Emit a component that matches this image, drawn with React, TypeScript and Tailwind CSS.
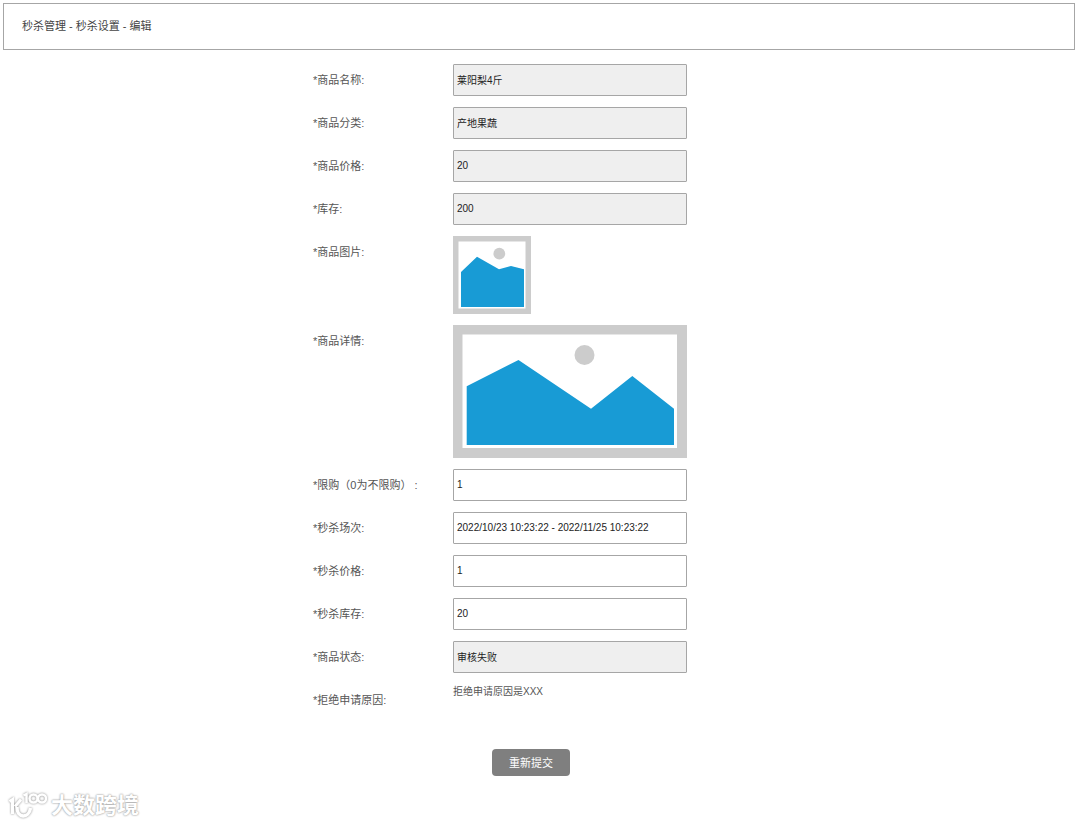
import { useState } from "react";

type Field = { id: string; label: string; value: string; readOnly?: boolean };

const goodsFields: Field[] = [
  { id: "name", label: "*商品名称:", value: "莱阳梨4斤", readOnly: true },
  { id: "category", label: "*商品分类:", value: "产地果蔬", readOnly: true },
  { id: "price", label: "*商品价格:", value: "20", readOnly: true },
  { id: "stock", label: "*库存:", value: "200", readOnly: true },
];

const seckillFields: Field[] = [
  { id: "limit", label: "*限购（0为不限购） :", value: "1" },
  { id: "session", label: "*秒杀场次:", value: "2022/10/23 10:23:22 - 2022/11/25 10:23:22" },
  { id: "seckillPrice", label: "*秒杀价格:", value: "1" },
  { id: "seckillStock", label: "*秒杀库存:", value: "20" },
  { id: "status", label: "*商品状态:", value: "审核失败", readOnly: true },
];

function FieldRow({ field }: { field: Field }) {
  const [value, setValue] = useState(field.value);
  return (
    <div className="flex items-center">
      <label htmlFor={field.id} className="w-[140px] shrink-0">{field.label}</label>
      <input
        id={field.id}
        type="text"
        value={value}
        readOnly={field.readOnly}
        onChange={(e) => setValue(e.target.value)}
        className="h-8 min-w-0 flex-1 rounded-[1px] border border-[#a6a6a6] bg-white px-[3px] pb-[2px] text-[10px] text-[#222] outline-none read-only:bg-[#efefef]"
      />
    </div>
  );
}

function Thumbnail() {
  return (
    <svg viewBox="0 0 78 78" className="w-[78px]" role="img" aria-label="商品图片">
      <rect width="78" height="78" fill="#ccc" />
      <rect x="5.5" y="5.5" width="67" height="67" fill="#fff" />
      <circle cx="46.3" cy="17.7" r="5.9" fill="#ccc" />
      <path d="M8 36 24 20.7 46 33.3 58 30 71 33.3V71H8Z" fill="#189bd5" />
    </svg>
  );
}

function DetailPicture() {
  return (
    <svg viewBox="0 0 234 133" className="w-full" role="img" aria-label="商品详情">
      <rect width="234" height="133" fill="#ccc" />
      <rect x="9.5" y="9.5" width="214.5" height="113.5" fill="#fff" />
      <circle cx="131.5" cy="30" r="10" fill="#ccc" />
      <path d="M13.7 61.3 65.5 35 138 83.7 179.3 51 221 83.7V120H13.7Z" fill="#189bd5" />
    </svg>
  );
}

function Watermark() {
  return (
    <div className="flex items-center gap-1 pl-1 text-white">
      <svg viewBox="0 0 40 30" className="w-10 drop-shadow-[0_0_1px_#888]" fill="none" stroke="currentColor" strokeWidth="3" aria-hidden="true">
        <path d="M2.5 10.5 5.5 8.5V23" />
        <path d="M14 8.5 8 15.5" />
        <path d="M10 16C9.5 27.5 22 28 23.5 17" strokeWidth="3.5" />
        <path d="M16.5 4.5 19.5 3V12" strokeWidth="2.5" />
        <circle cx="26.5" cy="7.5" r="4" strokeWidth="2.5" />
        <circle cx="35" cy="7.5" r="4" strokeWidth="2.5" />
      </svg>
      <span className="text-[22px] leading-8 font-bold [text-shadow:0_0_2px_#999,0_0_2px_#bbb]">大数跨境</span>
    </div>
  );
}

export default function App() {
  return (
    <div className="bg-white p-[3px] pr-[5px] font-['Liberation_Sans','Noto_Sans_CJK_SC',sans-serif] text-[11px] leading-4 text-[#555]">
      <header className="border border-[#a6a6a6] pt-[14px] pb-[15px] pl-[18px] text-[#444]">
        <h1>秒杀管理 - 秒杀设置 - 编辑</h1>
      </header>

      <div className="flex justify-center pt-[14px] pr-[78px]">
        <form className="flex w-full max-w-[374px] flex-col gap-[11px]" onSubmit={(e) => e.preventDefault()}>
          {goodsFields.map((f) => (
            <FieldRow key={f.id} field={f} />
          ))}

          <div className="flex">
            <span className="w-[140px] shrink-0 pt-2">*商品图片:</span>
            <Thumbnail />
          </div>
          <div className="flex">
            <span className="w-[140px] shrink-0 pt-2">*商品详情:</span>
            <div className="min-w-0 flex-1">
              <DetailPicture />
            </div>
          </div>

          {seckillFields.map((f) => (
            <FieldRow key={f.id} field={f} />
          ))}

          <div className="flex">
            <span className="w-[140px] shrink-0 pt-2">*拒绝申请原因:</span>
            <p className="text-[10px]">拒绝申请原因是XXX</p>
          </div>

          <div className="flex pt-[30px] pl-[179px]">
            <button type="submit" className="h-[27px] w-[78px] rounded bg-[#7f7f7f] text-white">
              重新提交
            </button>
          </div>
        </form>
      </div>

      <footer className="pt-[14px]">
        <Watermark />
      </footer>
    </div>
  );
}
